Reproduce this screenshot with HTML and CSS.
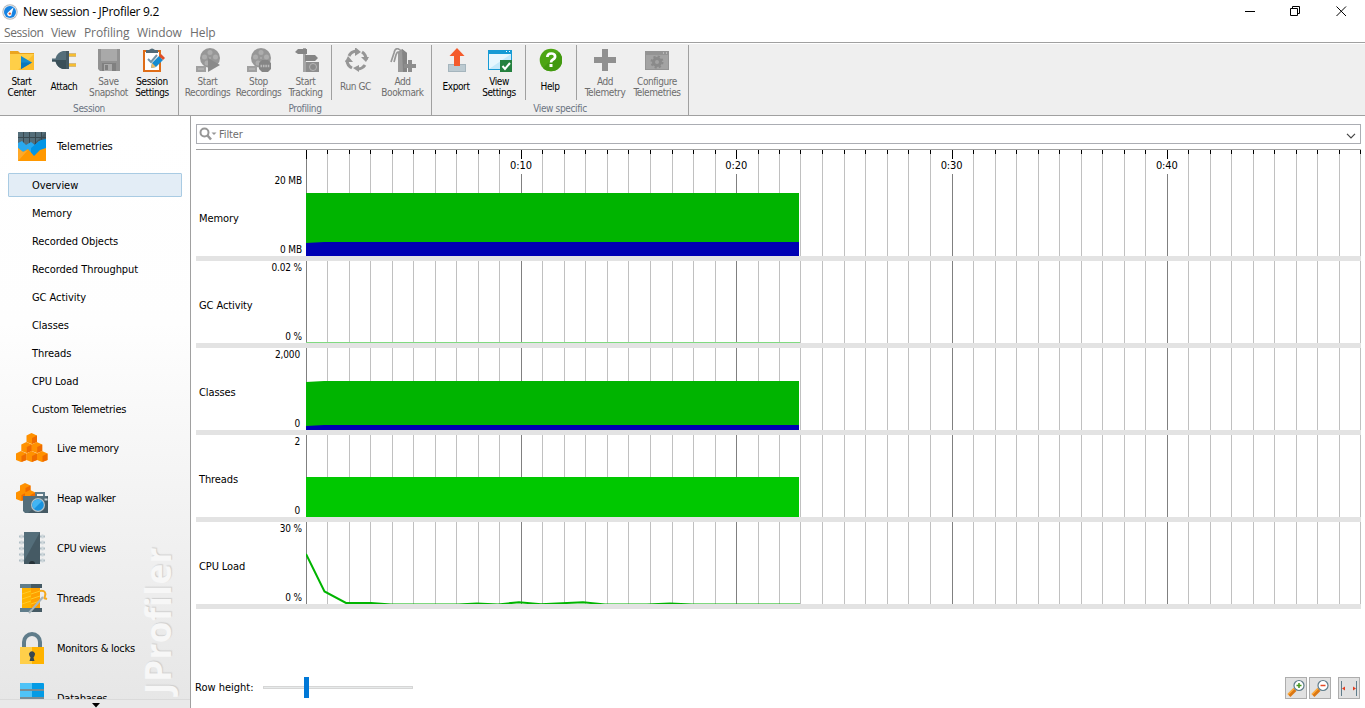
FILE: index.html
```html
<!DOCTYPE html>
<html lang="en">
<head>
<meta charset="utf-8">
<title>New session - JProfiler 9.2</title>
<link rel="stylesheet" href="styles.css">
</head>
<body>
<div class="window">
  <header class="titlebar">
    <svg class="app-icon" width="16" height="16" viewBox="0 0 16 16"><circle cx="8" cy="8" r="7.7" fill="#b5b9bd"/><circle cx="8" cy="8" r="6.8" fill="#e9edf1"/><circle cx="8" cy="8" r="6" fill="#1683e2"/><path d="M11.6 3.2 9.7 9.7A2.3 2.3 0 1 1 6.3 8z" fill="#fff"/><circle cx="7.8" cy="9.6" r="1.2" fill="#e4562a"/></svg>
    <span class="title">New session - JProfiler 9.2</span>
    <svg class="controls" width="110" height="22" viewBox="0 0 110 22" fill="none" stroke="#000"><path d="M0 10.5h10M45.500 7.500h7v7h-7zM47.500 7.500v-2h7v7h-2M91.500 5.500l9.500 9.500M101 5.500 91.500 15"/></svg>
  </header>
  <nav class="menubar"><span class="m1">Session</span><span class="m2">View</span><span class="m3">Profiling</span><span class="m4">Window</span><span class="m5">Help</span></nav>

  <div class="toolbar">
    <section class="group g1">
      <div class="buttons">
        <div class="cell c1">
          <div class="btn w43"><svg width="24" height="24" viewBox="0 0 24 24"><path d="M0 3h8l2 2h14v17H0z" fill="#eba51f"/><path d="M0 6h24v16H0z" fill="#ffcf48"/><path d="M24 6v16H8z" fill="#fbbd2d"/><path d="M11 8v13l11-6.500z" fill="#148cce"/><path d="M11 14.500h11L11 21z" fill="#0877ba"/></svg><span>Start<br>Center</span></div>
          <div class="btn w42"><svg width="24" height="24" viewBox="0 0 24 24"><path d="M15 7h9M15 17h9" stroke="#b98416" stroke-width="3"/><path d="M15 7h9M15 17h9" stroke="#f5bd31" stroke-width="2"/><path d="M14 3v18h-3c-4-1-6-3-7.500-7.500H0v-3h3.500C5 6 7 4 11 3z" fill="#546e7a"/><path d="M0 12h14v9h-3c-4-1-6-3-7.500-7.500H0z" fill="#3b5059"/><path d="M14 3h3v18h-3z" fill="#455a64"/></svg><span class="one">Attach</span></div>
          <div class="btn w47 off"><svg width="24" height="24" viewBox="0 0 24 24"><path d="M1 1h22v22H3l-2-2z" fill="#929292"/><path d="M4 1h16v12H4z" fill="#a9a9a9"/><path d="M5 15h14v8H5z" fill="#808080"/><path d="M7 16h8v7H7z" fill="#aaa"/><path d="M8 17h3v5H8z" fill="#808080"/></svg><span>Save<br>Snapshot</span></div>
          <div class="btn w40"><svg class="shift" width="24" height="24" viewBox="0 0 24 24"><path d="M3 3h16v20H3z" fill="#fff" stroke="#df6d18" stroke-width="2"/><path d="M5 5V2h3q3-3 6 0h3v3H5z" fill="#536c79"/><path d="m7 11 3 3 6-7" fill="none" stroke="#7395a9" stroke-width="2"/><path d="m10 20 1-5 7-7 4 4-7 7z" fill="#168cd0"/><path d="m18 8 2-2 4 4-2 2z" fill="#df4d26"/><path d="m10 20 1-5 4 4z" fill="#f1bc65"/></svg><span>Session<br>Settings</span></div>
        </div>
      </div>
      <div class="caption">Session</div>
    </section>
    <section class="group g2">
      <div class="buttons">
        <div class="cell c2">
          <div class="btn w51 off"><svg width="26" height="24" viewBox="0 0 26 24"><use href="#reel"/><path d="M13 10v14l12-7z" fill="#8a8a8a"/></svg><span>Start<br>Recordings</span></div>
          <div class="btn w51 off"><svg width="26" height="24" viewBox="0 0 26 24"><use href="#reel"/><path d="m16 12h6l3 3v6l-3 3h-6l-3-3v-6z" fill="#858585"/><path d="M14.500 18h9" stroke="#b8b8b8" stroke-width="2.500" stroke-dasharray="1.600 .8"/></svg><span>Stop<br>Recordings</span></div>
          <div class="btn w43 off"><svg class="shift" width="24" height="24" viewBox="0 0 24 24"><path d="M8 0h3v24H8z" fill="#a5a5a5"/><path d="M0 4l3-3h9v5H3zM10 7h10l3 3-3 3H10z" fill="#858585"/><path d="M11 14h13v10H11z" fill="#8d8d8d"/><circle cx="18" cy="19" r="3.500" fill="#8a8a8a" stroke="#b5b5b5"/></svg><span>Start<br>Tracking</span></div>
        </div>
        <div class="cell c3">
          <div class="btn w41 off"><svg class="shift" width="24" height="24" viewBox="0 0 24 24"><g fill="none" stroke="#969696" stroke-width="3"><path d="M4 8a9 9 0 0 1 7-5M17 4a9 9 0 0 1 4 8M20 17a9 9 0 0 1-7 4M7 20a9 9 0 0 1-5-8"/></g><path d="m10-1 6 5-6 4zM16 9h8l-3 5zM14 17v7l-6-4zM0 14l3-6 5 6z" fill="#969696"/></svg><span class="one">Run GC</span></div>
          <div class="btn w53 off"><svg width="26" height="24" viewBox="0 0 26 24"><path d="M8 4l4-3 5 4v19h-9z" fill="#9a9a9a"/><path d="M12 1l5 4v19h-4z" fill="#848484"/><path d="M12 4C8-1 5 0 4 5L1 14M10 5C6 2 6 8 4 14" fill="none" stroke="#979797" stroke-width="1.700"/><path d="M18 12h4v4h4v4h-4v4h-4v-4h-4v-4h4z" fill="#8d8d8d"/></svg><span>Add<br>Bookmark</span></div>
        </div>
      </div>
      <div class="caption">Profiling</div>
    </section>
    <section class="group g3">
      <div class="buttons">
        <div class="cell c4">
          <div class="btn w36"><svg class="shift" width="24" height="24" viewBox="0 0 24 24"><path d="M3 16h18v8H3z" fill="#a5b5bd"/><path d="M4 17h16v6H4z" fill="#bccad1"/><path d="m12 0 7.500 8H15v10H9V8H4.500z" fill="#f45b2c"/></svg><span class="one">Export</span></div>
          <div class="btn w50"><svg class="shift" width="25" height="24" viewBox="0 0 25 24"><path d="M0 2h24v20H0z" fill="#169bd5"/><path d="M1 6h22v15H1z" fill="#e7f7fe"/><path d="M23 6v15H1z" fill="#c5eafb"/><path d="M18 3.500h1M21 3.500h1" stroke="#fff"/><path d="M12 12h12v12H12z" fill="#24813f"/><path d="m14.500 18 2.500 3 5-6" fill="none" stroke="#fff" stroke-width="2"/></svg><span>View<br>Settings</span></div>
        </div>
        <div class="cell c5">
          <div class="btn w46"><svg width="24" height="24" viewBox="0 0 24 24"><circle cx="13" cy="12" r="11.300" fill="#4da514"/><path d="M5 20A11.300 11.300 0 0 0 21 4z" fill="#429910"/><path d="M9.300 9q.2-3.500 3.900-3.500c5 0 4.700 4.500 1.800 6-1.600.9-2 1.500-2 3" fill="none" stroke="#fff" stroke-width="2.700"/><path d="M11.500 16h3v3h-3z" fill="#fff"/></svg><span class="one">Help</span></div>
        </div>
        <div class="cell c6">
          <div class="btn w48 off"><svg width="24" height="24" viewBox="0 0 24 24"><path d="M9 1h6v8h8v6h-8v8H9v-8H1V9h8z" fill="#909090"/></svg><span>Add<br>Telemetry</span></div>
          <div class="btn w56 off"><svg width="24" height="24" viewBox="0 0 24 24"><path d="M0 3h24v19H0z" fill="#949494"/><path d="M1 7h22v14H1z" fill="#a3a3a3"/><path d="M18 5h1M21 5h1" stroke="#ddd"/><circle cx="12" cy="14" r="3.500" fill="none" stroke="#8a8a8a" stroke-width="3"/><circle cx="12" cy="14" r="5.500" fill="none" stroke="#8a8a8a" stroke-width="2" stroke-dasharray="2.200 2.120"/></svg><span>Configure<br>Telemetries</span></div>
        </div>
      </div>
      <div class="caption">View specific</div>
    </section>
  </div>

  <main class="body">
    <aside class="sidebar">
      <div class="watermark">JProfiler</div>
      <div class="views">
        <div class="view"><svg width="32" height="32" viewBox="0 0 32 32"><path d="M2 2h28v29H2z" fill="#455a64"/><path d="M2 2h28L12 20H2z" fill="#546e7a"/><path d="M7.500 2v12M13.500 2v12M19.500 2v12M25.500 2v12M2 7.500h28" stroke="#38484f"/><path d="m2 13 4-2 4 4 5-3 4 3 4-4 7-1v19H2z" fill="#29a9ef"/><path d="m15 18 6-5 4-3 5-1v20H15z" fill="#0395e5"/><path d="m2 18 5 4 5-3 6 7 6-6 6-2v13H2z" fill="#ff9800"/><path d="m2 18 5 4 5-2L2 31z" fill="#ffa929"/></svg><span>Telemetries</span></div>
        <div class="subs">
          <div class="sub selected">Overview</div><div class="sub">Memory</div><div class="sub">Recorded Objects</div><div class="sub">Recorded Throughput</div><div class="sub">GC Activity</div><div class="sub">Classes</div><div class="sub">Threads</div><div class="sub">CPU Load</div><div class="sub tight">Custom Telemetries</div>
        </div>
        <div class="view"><svg width="32" height="32" viewBox="0 0 32 32"><g id="cube"><path d="m10.500 3.500 5-2.500 5.500 2.500v6.500l-5.500 2-5-2z" fill="#ff9100"/><path d="M16 6 21 3.500V10l-5 2z" fill="#ef6c00"/></g><use href="#cube" x="-5.200" y="9"/><use href="#cube" x="5.200" y="9"/><use href="#cube" x="-10.500" y="18"/><use href="#cube" y="18"/><use href="#cube" x="10.500" y="18"/></svg><span>Live memory</span></div>
        <div class="view"><svg width="32" height="32" viewBox="0 0 32 32"><g transform="translate(-6.500 0)"><use href="#cube"/><use href="#cube" x="-4" y="7"/><use href="#cube" x="5" y="7"/></g><path d="M20 15v-4h8v4" fill="none" stroke="#607d8b" stroke-width="2"/><path d="M7 14h25v17H9l-2-2z" fill="#546e7a"/><path d="M32 14v17H12z" fill="#455a64"/><circle cx="22" cy="23" r="7" fill="#b4c2c9"/><circle cx="22" cy="23" r="5.800" fill="#1993df"/><path d="M18 19a5.800 5.800 0 0 1 8 0l-8 8a6 6 0 0 1 0-8" fill="#42b5f4"/><path d="M28.500 17.500h3" stroke="#d0dce2" stroke-width="2"/></svg><span>Heap walker</span></div>
        <div class="view"><svg width="32" height="32" viewBox="0 0 32 32"><path d="M3 4.500h26M3 10.500h26M3 16.500h26M3 22.500h26M3 28.500h26" stroke="#b0bec5" stroke-width="2"/><path d="M5.500 2.500v28M26.500 2.500v28" stroke="#cfd8dc" stroke-width="2" stroke-dasharray="4 2"/><path d="M8 0h16v32H8z" fill="#455a64"/><path d="M8 0h16L8 29z" fill="#546e7a"/><path d="M13 32a3 3 0 0 1 6 0" fill="#263238"/></svg><span>CPU views</span></div>
        <div class="view"><svg width="32" height="32" viewBox="0 0 32 32"><path d="M4 2h22v4H4zM4 26h22v4H4z" fill="#607d8b"/><path d="M15 2h11v4H15zM15 26h11v4H15z" fill="#455a64"/><path d="M6 6h18v20H6z" fill="#ffa000"/><path d="M6 6h9v20H6z" fill="#ffb300"/><path d="m6 12 9-3M6 17l9-3M6 22l9-3M15 12l9-3M15 17l9-3M15 22l9-3" stroke="#ffca28"/><path d="M24 9c5-1 6 2 5 5s-1 2 2 3" fill="none" stroke="#f6a91b" stroke-width="2"/><path d="m13 31 14-16" stroke="#a7b5bb" stroke-width="2"/></svg><span>Threads</span></div>
        <div class="view"><svg width="32" height="32" viewBox="0 0 32 32"><path d="M8 16V10a8 8 0 0 1 16 0v6" fill="none" stroke="#607d8b" stroke-width="4"/><path d="M4 15h24v17H4z" fill="#ffb300"/><path d="M4 15h12v17H4z" fill="#ffcf4a"/><path d="M13.500 24a3 3 0 1 1 5 0l-1 1.500 1 3.500h-5l1-3.500z" fill="#37474f"/></svg><span>Monitors &amp; locks</span></div>
        <div class="view"><svg width="32" height="32" viewBox="0 0 32 32"><path d="M4 2q0-1 1-1h22q1 0 1 1v5H4zM4 9h24v6H4zM4 17h24v6H4z" fill="#039be5"/><path d="M4 2q0-1 1-1h11v6H4zM4 9h12v6H4zM4 17h12v6H4z" fill="#4fc3f7"/><path d="M4 8h24M4 16h24" stroke="#546e7a" stroke-width="1.500"/></svg><span>Databases</span></div>
      </div>
      <div class="scroll-down"><svg width="8" height="5" viewBox="0 0 8 5"><path d="M0 0h8L4 4.500z"/></svg></div>
    </aside>

    <section class="content">
      <div class="filter">
        <svg width="18" height="14" viewBox="0 0 18 14"><circle cx="5.500" cy="5.500" r="4" fill="none" stroke="#979797" stroke-width="2"/><path d="m8.500 8.500 3.500 4" stroke="#979797" stroke-width="2.500"/><path d="M12.500 5.500h5L15 8z" fill="#979797"/></svg>
        <span>Filter</span>
        <svg class="chevron" width="10" height="6" viewBox="0 0 10 6"><path d="m1 .8 4 4 4-4" fill="none" stroke="#444" stroke-width="1.200"/></svg>
      </div>
      <div class="ruler">
        <svg width="1055" height="24" viewBox="0 0 1055 24" shape-rendering="crispEdges">
          <use href="#minor" stroke="#c0c0c0"/><path d="M.5 0v24" stroke="#808080"/>
          <svg width="1055" height="4"><use href="#minor" stroke="#000"/></svg>
          <path d="M.5 0v9M215.500 0v9M430.500 0v9M646.500 0v9M861.500 0v9" stroke="#000"/>
        </svg>
        <div class="times"><span></span><span>0:10</span><span>0:20</span><span>0:30</span><span>0:40</span></div>
      </div>
      <div class="row"><div class="name">Memory</div><div class="scale"><span>20 MB</span><span>0 MB</span></div><svg class="plot" width="1055" height="82" viewBox="0 0 1055 82"><use href="#grid"/><path d="M0 19h493v63H0z" fill="#00b400"/><path d="M0 69l18-1h475v14H0z" fill="#0000b4"/></svg></div>
      <div class="row"><div class="name">GC Activity</div><div class="scale"><span>0.02 %</span><span>0 %</span></div><svg class="plot" width="1055" height="82" viewBox="0 0 1055 82"><use href="#grid"/><path d="M0 81.500h494" stroke="#80da80"/></svg></div>
      <div class="row"><div class="name">Classes</div><div class="scale num"><span>2,000</span><span>0</span></div><svg class="plot" width="1055" height="82" viewBox="0 0 1055 82"><use href="#grid"/><path d="M0 34l18-1h475v49H0z" fill="#00b400"/><path d="M0 78l18-1h475v5H0z" fill="#0000b4"/></svg></div>
      <div class="row"><div class="name">Threads</div><div class="scale num"><span>2</span><span>0</span></div><svg class="plot" width="1055" height="82" viewBox="0 0 1055 82"><use href="#grid"/><path d="M0 42h493v40H0z" fill="#00c800"/></svg></div>
      <div class="row"><div class="name">CPU Load</div><div class="scale"><span>30 %</span><span>0 %</span></div><svg class="plot" width="1055" height="82" viewBox="0 0 1055 82"><use href="#grid"/><path d="M0 32 18.500 69.500 40 81h25l20 1.400h67l19-1 21 1 21-2.200 22 2 42-2 22 2.200h42l23-1 22 1h108" fill="none" stroke="#00b400" stroke-width="2"/></svg></div>
      <footer class="footer">
        <span class="height-label">Row height:</span>
        <div class="slider"><div class="thumb"></div></div>
        <div class="zoom-buttons">
          <div class="tool"><svg width="20" height="20" viewBox="0 0 20 20"><use href="#lens"/><path d="M10.500 7.500h5M13 5v5" stroke="#43951b" stroke-width="1.500"/></svg></div>
          <div class="tool"><svg width="20" height="20" viewBox="0 0 20 20"><use href="#lens"/><path d="M10.500 7.500h5" stroke="#e44a27" stroke-width="1.500"/></svg></div>
          <div class="tool last"><svg width="20" height="20" viewBox="0 0 20 20"><path d="M2.500 3v15M17.500 3v15" stroke="#607d8b"/><path d="m3 10.500 3-2v4zM17 10.500l-3-2v4z" fill="#e33e20"/></svg></div>
        </div>
      </footer>
    </section>
  </main>
</div>
<svg class="defs" width="0" height="0">
  <defs>
    <path id="minor" shape-rendering="crispEdges" d="M21.500 0v82M43.500 0v82M64.500 0v82M86.500 0v82M107.500 0v82M129.500 0v82M150.500 0v82M172.500 0v82M193.500 0v82M236.500 0v82M258.500 0v82M279.500 0v82M301.500 0v82M322.500 0v82M344.500 0v82M366.500 0v82M387.500 0v82M409.500 0v82M452.500 0v82M473.500 0v82M494.500 0v82M516.500 0v82M538.500 0v82M559.500 0v82M581.500 0v82M602.500 0v82M624.500 0v82M667.500 0v82M689.500 0v82M710.500 0v82M732.500 0v82M753.500 0v82M775.500 0v82M796.500 0v82M818.500 0v82M839.500 0v82M882.500 0v82M904.500 0v82M925.500 0v82M947.500 0v82M968.500 0v82M990.500 0v82M1011.500 0v82M1033.500 0v82M1054.500 0v82"/>
    <g id="grid"><use href="#minor" stroke="#c0c0c0"/><path shape-rendering="crispEdges" stroke="#808080" d="M.5 0v82M215.500 0v82M430.500 0v82M646.500 0v82M861.500 0v82"/></g>
    <g id="reel"><circle cx="15" cy="10" r="10" fill="#979797"/><g fill="#adadad"><circle cx="15" cy="4.500" r="2.500"/><circle cx="9.500" cy="9" r="2.500"/><circle cx="20.500" cy="9" r="2.500"/><circle cx="12" cy="15" r="2.500"/><circle cx="15" cy="10" r="1"/></g><path d="M1 18h10v6H1z" fill="#a0a0a0"/><path d="M3 21h6" stroke="#b0b0b0" stroke-width="2"/></g>
    <g id="lens"><path d="m3 17.500 6-6" stroke="#db7713" stroke-width="4"/><path d="m2 16.500 6-6" stroke="#ffae3d" stroke-width="1.500"/><circle cx="13" cy="7.500" r="5" fill="#fff" stroke="#607d8b" stroke-width="1.200"/></g>
  </defs>
</svg>
</body>
</html>
```
FILE: styles.css
```css
* { box-sizing: border-box; }
body { margin: 0; background: #fff; color: #000; font: 11px/13px "DejaVu Sans Condensed", "DejaVu Sans", sans-serif; font-stretch: condensed; letter-spacing: -0.1px; }
svg { display: block; flex: none; }
.window { width: 1365px; height: 708px; display: flex; flex-direction: column; overflow: hidden; }
.defs { position: absolute; }

.titlebar { height: 23px; flex: none; display: flex; align-items: center; padding: 0 10px 0 2px; font: 12px/16px "Open Sans", sans-serif; letter-spacing: -0.3px; }
.title { margin-left: 5px; }
.controls { margin-left: auto; }
.menubar { height: 19px; flex: none; display: flex; padding-left: 4px; font: 12px/20px "Open Sans", sans-serif; color: #6d6d6d; letter-spacing: -0.1px; }
.m1 { width: 47px; letter-spacing: -0.4px; }
.m2 { width: 33px; letter-spacing: -0.4px; }
.m3 { width: 53px; }
.m4 { width: 53px; }

.toolbar { height: 74px; flex: none; display: flex; background: #efefef; border-top: 1px solid #a0a0a0; border-bottom: 1px solid #a0a0a0; box-shadow: inset 0 1px #fff; }
.group { border-right: 1px solid #a0a0a0; margin-top: 2px; }
.g1 { width: 179px; }
.g2 { width: 253px; }
.g3 { width: 257px; }
.buttons { display: flex; height: 55px; }
.cell { display: flex; padding-top: 3px; border-right: 1px solid #a0a0a0; }
.cell:last-child { border-right: 0; }
.c2 { width: 153px; padding-left: 3px; }
.c3 { padding-left: 3px; }
.c4 { width: 94px; padding-left: 6px; }
.c5 { width: 51px; padding-left: 1px; }
.c6 { padding-left: 4px; }
.btn { display: flex; flex-direction: column; align-items: center; font-size: 10px; line-height: 11px; text-align: center; letter-spacing: -0.4px; white-space: nowrap; }
.btn span { margin-top: 4px; }
.btn .one { margin-top: 9px; }
.off { color: #6d6d6d; }
.shift { margin-left: 2px; }
.w36 { width: 36px; } .w40 { width: 40px; } .w41 { width: 41px; } .w42 { width: 42px; } .w43 { width: 43px; } .w46 { width: 46px; } .w47 { width: 47px; } .w48 { width: 48px; } .w50 { width: 50px; } .w51 { width: 51px; } .w53 { width: 53px; } .w56 { width: 56px; }
.caption { text-align: center; color: #6b7482; font-size: 10px; line-height: 12px; padding-top: 3px; letter-spacing: -0.35px; }

.body { flex: 1; display: flex; min-height: 0; }
.sidebar { position: relative; width: 191px; flex: none; display: flex; flex-direction: column; border-right: 1px solid #a0a0a0; background: linear-gradient(#fff 0%, #fefefe 35%, #e6e6e6 100%); }
.watermark { position: absolute; left: 136px; bottom: 14px; writing-mode: vertical-rl; transform: rotate(180deg); font: bold 35px/44px "Open Sans", sans-serif; letter-spacing: .5px; color: #f7f7f7; text-shadow: 1px 1px 1px #cfcfcf; }
.views { position: relative; flex: 1; min-height: 0; overflow: hidden; padding-top: 5px; }
.view { height: 50px; display: flex; align-items: center; padding-left: 16px; letter-spacing: -0.25px; }
.view:first-child { letter-spacing: -0.1px; }
.view span { margin-left: 9px; }
.subs { height: 252px; padding-top: 2px; display: flex; flex-direction: column; gap: 4px; }
.sub { height: 24px; flex: none; line-height: 24px; margin: 0 8px; padding-left: 23px; border: 1px solid transparent; letter-spacing: -0.05px; }
.tight { letter-spacing: -0.2px; }
.sub.selected { background: #e3edf6; border-color: #a9cbe3; border-radius: 1px; }
.scroll-down { height: 9px; flex: none; background: #e9e9e9; border-top: 1px solid #dadada; display: flex; justify-content: center; padding: 3px 0 0 1px; }

.content { flex: 1; min-width: 0; padding: 8px 4px 0 5px; display: flex; flex-direction: column; }
.filter { height: 20px; flex: none; border: 1px solid #abadb3; display: flex; align-items: center; padding: 0 4px 0 2px; color: #6d6d6d; }
.filter span { margin-left: 2px; }
.chevron { margin: 4px 0 0 auto; }
.ruler { height: 25px; flex: none; margin-top: 5px; border-top: 1px solid #a0a0a0; padding-left: 110px; position: relative; }
.times { position: absolute; left: 2px; top: 9px; display: flex; }
.times span { width: 215.300px; text-align: center; height: 15px; line-height: 14px; }
.row { height: 87px; flex: none; display: flex; border-bottom: 5px solid #e3e3e3; }
.name { width: 60px; padding-left: 3px; line-height: 90px; height: 82px; white-space: nowrap; }
.scale { width: 46px; display: flex; flex-direction: column; justify-content: space-between; text-align: right; font-size: 10px; letter-spacing: -0.15px; }
.scale.num { padding-right: 2px; }
.plot { margin-left: 4px; }
.footer { margin-top: auto; height: 40px; display: flex; align-items: center; }
.height-label { width: 67px; white-space: nowrap; margin-left: -1px; letter-spacing: 0; }
.slider { width: 150px; height: 3px; margin-left: 1px; border: 1px solid #d6d6d6; background: #e7eaea; display: flex; align-items: center; padding-left: 40px; }
.thumb { width: 5px; height: 21px; flex: none; background: #0078d7; }
.footer { padding-bottom: 1px; }
.zoom-buttons { margin: 1px 1px 0 auto; display: flex; gap: 2px; }
.tool { width: 22px; height: 22px; border: 1px solid #adadad; background: #e1e1e1; }
.last { margin-left: 5px; }
```
